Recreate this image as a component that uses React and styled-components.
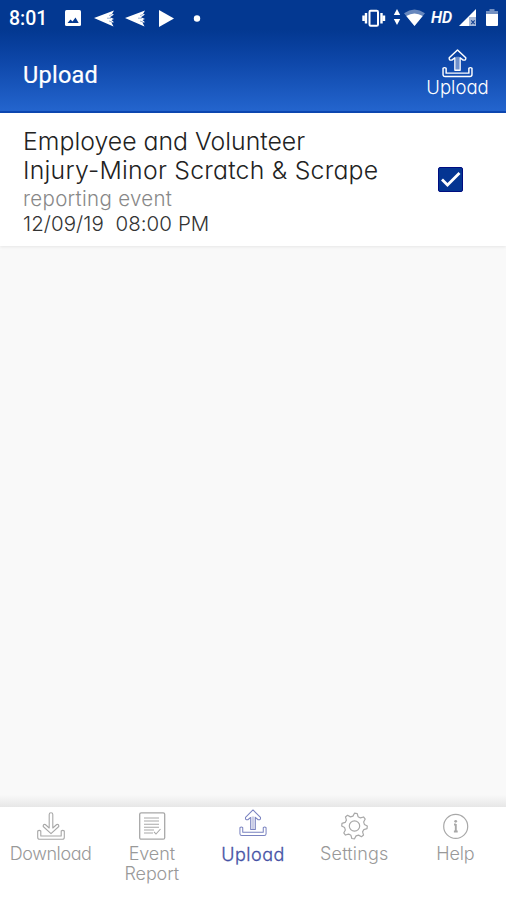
import React from 'react';
import styled, { createGlobalStyle } from 'styled-components';

const GlobalStyle = createGlobalStyle`
  * { box-sizing: border-box; }
  body { margin: 0; background: #fafafa; }
  svg { display: block; flex: none; overflow: visible; }
`;

const Screen = styled.div`
  display: flex;
  flex-direction: column;
  width: 506px;
  height: 900px;
  overflow: hidden;
  background: #f9f9f9;
  font-family: Inter, 'Liberation Sans', sans-serif;
  font-weight: 300;
  font-feature-settings: 'cv11' 1, 'calt' 0;
`;

const Header = styled.header`
  flex: none;
  height: 113px;
  color: #fff;
  background: linear-gradient(#033891 0, #033891 30px, #0d46a8 60px, #2364cd 110px);
  border-bottom: 2px solid #0d47b2;
`;

const StatusBar = styled.div`
  display: flex;
  align-items: center;
  justify-content: space-between;
  height: 36px;
  padding: 0 7px 0 9px;
`;

const Clock = styled.span`
  width: 46px;
  padding-top: 1px;
  font: 500 19.5px/37px Roboto, sans-serif;
`;

const StatusGroup = styled.div`
  display: flex;
  align-items: center;
  gap: ${(p) => p.$gap || 0}px;
`;

const Hd = styled.span`
  width: 27px;
  margin-right: 1px;
  font: italic 500 16px/36px Roboto, sans-serif;
  -webkit-text-stroke: 0.2px #fff;
`;

const TitleBar = styled.div`
  display: flex;
  justify-content: space-between;
  height: 75px;
  padding: 0 15px 0 23px;
`;

const Title = styled.h1`
  margin: 0;
  font: 400 23.5px/78px Roboto, sans-serif;
  letter-spacing: 0.25px;
  -webkit-text-stroke: 0.2px #fff;
`;

const UploadButton = styled.button`
  display: flex;
  flex-direction: column;
  align-items: center;
  width: 67px;
  padding: 13px 0 0;
  border: 0;
  background: none;
  color: #fff;
  font: inherit;
  font-weight: 300;
  font-size: 18.5px;
  line-height: 18px;
`;

const EventRow = styled.section`
  display: flex;
  flex: none;
  justify-content: space-between;
  height: 133px;
  padding: 14px 43px 0 23px;
  background: #fff;
  box-shadow: 0 1px 3px rgba(0, 0, 0, 0.08);
`;

const EventLine = styled.div`
  height: ${(p) => p.$height}px;
  color: ${(p) => p.$color};
  font-size: ${(p) => p.$size}px;
  line-height: ${(p) => p.$height}px;
  letter-spacing: ${(p) => p.$spacing}px;
  white-space: pre;
`;

const CheckBox = styled.div`
  width: 25px;
  height: 25px;
  margin-top: 40px;
  border: 1px solid #000d80;
  border-radius: 2px;
  background: #043592;
`;

const Content = styled.main`
  flex: 1;
`;

const NavShade = styled.div`
  flex: none;
  height: 12px;
  background: linear-gradient(#f9f9f9, #e7e7e7);
`;

const Nav = styled.nav`
  display: grid;
  flex: none;
  grid-template-columns: repeat(5, 1fr);
  height: 93px;
  background: #fff;
`;

const NavItem = styled.a`
  display: flex;
  flex-direction: column;
  align-items: center;
  padding-top: ${(p) => (p.$active ? 2 : 5)}px;
  color: ${(p) => (p.$active ? '#4652a5' : '#999')};
  font-size: 18px;
  font-weight: 300;
  line-height: 20px;
  letter-spacing: ${(p) => p.$spacing || 0}px;
  text-align: center;

  svg {
    color: ${(p) => (p.$active ? '#7a83c0' : '#a8a8a8')};
  }
`;

const NavLabel = styled.span`
  margin-top: ${(p) => (p.$active ? 8 : 4)}px;
  -webkit-text-stroke: ${(p) => (p.$active ? '0.3px' : 0)} currentColor;
`;

const UploadIcon = ({ width = 30, height = 30, stroke = 1.3 }) => (
  <svg width={width} height={height} viewBox="0 0 30 30" preserveAspectRatio="none" fill="none" stroke="currentColor" strokeWidth={stroke} strokeLinejoin="round">
    <path d="M15 1 L23 9 Q23.5 12 20.5 11.5 L17.5 9 V22 H12.5 V9 L9.5 11.5 Q6.5 12 7 9 Z" />
    <path d="M15 8 V22" strokeWidth="3" opacity=".4" />
    <path d="M1 20 Q2.5 18.5 4 20 V25 H26 V20 Q27.5 18.5 29 20 V26.5 Q29 28.5 27 28.5 H3 Q1 28.5 1 26.5 Z" />
  </svg>
);

const DownloadIcon = () => (
  <svg width="28" height="28" viewBox="0 0 28 28" fill="none" stroke="currentColor" strokeWidth="1.1" strokeLinejoin="round">
    <path d="M12.2 2.5 Q12.2 .7 14 .7 T15.8 2.5 V16 L19.7 12.5 Q22 12 21.8 14.5 L14 21.6 L6.2 14.5 Q6 12 8.3 12.5 L12.2 16 Z" />
    <path d="M.7 19 Q2.3 17.7 3.8 19 V24 H24.2 V19 Q25.7 17.7 27.3 19 V25.2 Q27.3 27.3 25.2 27.3 H2.8 Q.7 27.3 .7 25.2 Z" />
  </svg>
);

const ReportIcon = () => (
  <svg width="28" height="28" viewBox="0 0 28 28" fill="none" stroke="currentColor" strokeWidth="1.3">
    <rect x="1.7" y=".8" width="25" height="26.4" rx="1.5" />
    <path d="M6 6h15M6 9h15M6 12.3h15M6 15.2h15M6 18h10M6 21h9M16 19.8l2 2.2 4.5-5" strokeWidth="1.1" />
  </svg>
);

const gearPath = (() => {
  const points = [];
  for (let i = 0; i < 8; i += 1) {
    [[-15, 10], [-6, 12.8], [6, 12.8], [15, 10]].forEach(([offset, r]) => {
      const a = ((i * 45 + offset + 6) * Math.PI) / 180;
      points.push(`${(14.5 + r * Math.sin(a)).toFixed(2)} ${(14 - r * Math.cos(a)).toFixed(2)}`);
    });
  }
  return `M${points.join('L')}Z`;
})();

const SettingsIcon = () => (
  <svg width="28" height="28" viewBox="0 0 28 28" fill="none" stroke="currentColor" strokeWidth="1.2" strokeLinejoin="round">
    <path d={gearPath} />
    <circle cx="14.5" cy="14" r="5.2" />
  </svg>
);

const HelpIcon = () => (
  <svg width="28" height="28" viewBox="0 0 28 28" fill="none" stroke="currentColor" strokeWidth="1.2">
    <circle cx="14.7" cy="14.4" r="12" />
    <path d="M14.8 12v8M13 12.5h1.8M12.9 19.5h3.8" strokeWidth="1.9" />
    <circle cx="14.7" cy="9.3" r="1.4" fill="currentColor" stroke="none" />
  </svg>
);

const PictureIcon = () => (
  <svg width="16" height="16" viewBox="0 0 16 16">
    <rect width="16" height="16" rx="1.5" fill="#fff" />
    <path d="M2.5 13 5.5 9.5 7.5 11.5 10.5 7.5 13.7 13Z" fill="#033891" />
  </svg>
);

const BirdIcon = () => (
  <svg width="21" height="17" viewBox="-3 0 21 17" fill="#fff">
    <path d="M0 8 20 .5 18 4 20 4.5 16 7.2 20 9 17.5 10 20 12.2 17.5 12.5 19.5 16.5Z" />
    <path d="M13 8.2h4M15 11l3 1M15 5.5l3-1" stroke="#033891" strokeWidth=".4" />
  </svg>
);

const PlayIcon = () => (
  <svg width="32" height="17" viewBox="-6 0 32 17" fill="#fff"><path d="M0 0 15 8.5 0 17Z" /></svg>
);

const DotIcon = () => (
  <svg width="7" height="7" viewBox="7 0 7 7" fill="#fff"><circle cx="9" cy="3.5" r="3.2" /></svg>
);

const SystemIcons = () => (
  <svg width="69" height="20" viewBox="0 0 69 20" fill="#fff">
    <rect x="7.5" y="2.7" width="8.5" height="15" rx="1.2" fill="none" stroke="#fff" strokeWidth="2" />
    <path d="M4 5v10.5M19.5 5v10.5M1.5 7.5v5.5M22 7.5v5.5" stroke="#fff" strokeWidth="2.4" />
    <path d="M35 1l3.2 6h-6.4ZM35 17l3.2-6h-6.4Z" />
    <path d="M42 5.2Q52.5-2 63 5.2L52.5 18Z" opacity=".4" />
    <path d="M44.3 8Q52.5 3 60.7 8L52.5 18Z" />
  </svg>
);

const SignalIcons = () => (
  <svg width="40" height="20" viewBox="0 0 40 20">
    <path d="M0 18 17 1V9H10V18Z" fill="#fff" />
    <path d="M10 9H17V18H10Z" fill="#fff" opacity=".65" />
    <path d="m12.2 12.3 3.5 3.8m0-3.8-3.5 3.8" stroke="#123f91" strokeWidth="1.1" />
    <path d="M27 3h3.5V1h5v2H39v4H27Z" fill="#fff" opacity=".45" />
    <path d="M27 6h12v11a1 1 0 0 1-1 1H28a1 1 0 0 1-1-1Z" fill="#fff" />
  </svg>
);

export default function App() {
  return (
    <>
      <GlobalStyle />
      <Screen>
        <Header>
          <StatusBar>
            <StatusGroup $gap={10}>
              <Clock>8:01</Clock>
              <PictureIcon />
              <BirdIcon />
              <BirdIcon />
              <PlayIcon />
              <DotIcon />
            </StatusGroup>
            <StatusGroup>
              <SystemIcons />
              <Hd>HD</Hd>
              <SignalIcons />
            </StatusGroup>
          </StatusBar>
          <TitleBar>
            <Title>Upload</Title>
            <UploadButton>
              <UploadIcon width={31} height={29} stroke={1.4} />
              Upload
            </UploadButton>
          </TitleBar>
        </Header>
        <EventRow>
          <div>
            <EventLine $height={29} $size={24.8} $spacing={0.02} $color="#222">Employee and Volunteer</EventLine>
            <EventLine $height={28} $size={24.8} $spacing={0.24} $color="#222">Injury-Minor Scratch &amp; Scrape</EventLine>
            <EventLine $height={30} $size={20.5} $spacing={0.3} $color="#888">reporting event</EventLine>
            <EventLine $height={20} $size={20.5} $spacing={0.06} $color="#333">{'12/09/19  08:00 PM'}</EventLine>
          </div>
          <CheckBox>
            <svg width="23" height="23" viewBox="0 0 23 23" fill="none" stroke="#fff" strokeWidth="2.8">
              <path d="m3 11.5 5.5 5.5L20.5 5" />
            </svg>
          </CheckBox>
        </EventRow>
        <Content />
        <NavShade />
        <Nav>
          <NavItem $spacing={-0.4}><DownloadIcon /><NavLabel>Download</NavLabel></NavItem>
          <NavItem $spacing={-0.1}><ReportIcon /><NavLabel>Event<br />Report</NavLabel></NavItem>
          <NavItem $active $spacing={0.5}><UploadIcon width={28} height={28} stroke={1.1} /><NavLabel $active>Upload</NavLabel></NavItem>
          <NavItem $spacing={0.15}><SettingsIcon /><NavLabel>Settings</NavLabel></NavItem>
          <NavItem $spacing={-0.1}><HelpIcon /><NavLabel>Help</NavLabel></NavItem>
        </Nav>
      </Screen>
    </>
  );
}
